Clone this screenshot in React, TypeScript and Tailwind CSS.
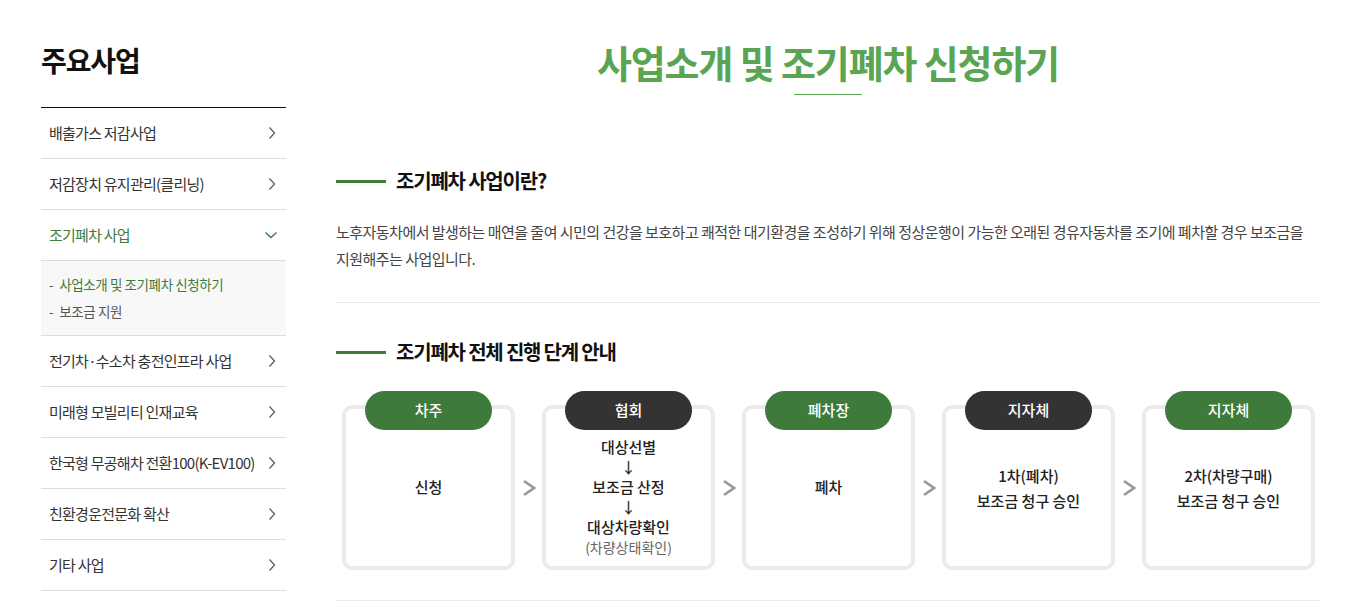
import React from "react";

const FONT = '"Noto Sans CJK KR", "Noto Sans", sans-serif';

function ChevronRight() {
  return (
    <svg width="8" height="14" viewBox="0 0 8 14" fill="none">
      <polyline points="1.5,1.5 6.5,7 1.5,12.5" stroke="#666" strokeWidth="1.4" />
    </svg>
  );
}

function ChevronDown() {
  return (
    <svg width="14" height="8" viewBox="0 0 14 8" fill="none">
      <polyline points="1.5,1.5 7,6.5 12.5,1.5" stroke="#3f7b3a" strokeWidth="1.4" />
    </svg>
  );
}

function StepArrow() {
  return (
    <div className="flex w-[27px] shrink-0 items-center justify-center pt-[14px]">
      <svg width="14" height="18" viewBox="0 0 14 18" fill="none">
        <polyline points="2,2 12,9 2,16" stroke="#999" strokeWidth="2.6" />
      </svg>
    </div>
  );
}

function Step({
  label,
  dark,
  children,
}: {
  label: string;
  dark?: boolean;
  children: React.ReactNode;
}) {
  return (
    <div className="relative w-[173px] shrink-0 pt-[14px]">
      <div
        className={`absolute left-[23px] top-0 flex h-[39px] w-[127px] items-center justify-center rounded-full text-[15px] font-medium text-white ${
          dark ? "bg-[#333333]" : "bg-[#3e7b3a]"
        }`}
      >
        {label}
      </div>
      <div className="flex h-[165px] flex-col items-center justify-center rounded-[10px] border-4 border-[#ebebeb] bg-white text-center text-[15px] font-medium text-[#222]">
        {children}
      </div>
    </div>
  );
}

function SectionHeading({ children }: { children: React.ReactNode }) {
  return (
    <div className="flex items-center gap-[10px]">
      <div className="h-[3px] w-[50px] bg-[#3f7b3a]" />
      <h3 className="text-[20px] font-bold tracking-[-0.06em] text-[#111]">{children}</h3>
    </div>
  );
}

const menu = ["배출가스 저감사업", "저감장치 유지관리(클리닝)"];
const menu2 = [
  "전기차·수소차 충전인프라 사업",
  "미래형 모빌리티 인재교육",
  "한국형 무공해차 전환100(K-EV100)",
  "친환경운전문화 확산",
  "기타 사업",
];

function MenuItem({ text }: { text: string }) {
  return (
    <li className="flex h-[51px] items-center justify-between border-b border-[#dddddd] pl-[8px] pr-[10px] text-[15px] tracking-[-0.05em] text-[#333]">
      <span>{text}</span>
      <ChevronRight />
    </li>
  );
}

export default function App() {
  return (
    <div className="flex bg-white pl-[41px]" style={{ fontFamily: FONT }}>
      <aside className="w-[245px] shrink-0 pt-[40px]">
        <h2 className="text-[28px] font-bold leading-[40px] tracking-[-0.04em] text-[#111]">주요사업</h2>
        <ul className="mt-[27px] border-t border-[#111]">
          {menu.map((m) => (
            <MenuItem key={m} text={m} />
          ))}
          <li className="flex h-[51px] items-center justify-between border-b border-[#dddddd] pl-[8px] pr-[8px] text-[15px] tracking-[-0.05em] text-[#3f7b3a]">
            <span>조기폐차 사업</span>
            <ChevronDown />
          </li>
          <li className="border-b border-[#dddddd] bg-[#f8f8f8] py-[10px] pl-[8px] text-[13.5px] leading-[27px] tracking-[-0.03em]">
            <div className="flex gap-[6px] text-[#3f7b3a]">
              <span className="text-[#555]">-</span>
              <span>사업소개 및 조기폐차 신청하기</span>
            </div>
            <div className="flex gap-[6px] text-[#555]">
              <span>-</span>
              <span>보조금 지원</span>
            </div>
          </li>
          {menu2.map((m) => (
            <MenuItem key={m} text={m} />
          ))}
        </ul>
      </aside>

      <main className="ml-[50px] w-[984px] shrink-0">
        <div className="flex flex-col items-center pt-[38px]">
          <h1 className="text-[38px] font-bold leading-[48px] tracking-[-0.03em] text-[#5aa553]">
            사업소개 및 조기폐차 신청하기
          </h1>
          <div className="mt-[8px] h-px w-[68px] bg-[#5aa553]" />
        </div>

        <div className="mt-[71px]">
          <SectionHeading>조기폐차 사업이란?</SectionHeading>
          <p className="mt-[22px] break-keep text-[15px] leading-[27px] tracking-[-0.035em] text-[#444]">
            노후자동차에서 발생하는 매연을 줄여 시민의 건강을 보호하고 쾌적한 대기환경을 조성하기 위해 정상운행이 가능한 오래된 경유자동차를 조기에 폐차할 경우 보조금을 지원해주는 사업입니다.
          </p>
        </div>

        <div className="mt-[30px] h-px w-full bg-[#ebebeb]" />

        <div className="mt-[34px]">
          <SectionHeading>조기폐차 전체 진행 단계 안내</SectionHeading>
          <div className="mt-[24px] flex pl-[6px]">
            <Step label="차주">신청</Step>
            <StepArrow />
            <Step label="협회" dark>
              <div className="mt-[19px] leading-[20px]">
                <div>대상선별</div>
                <div>↓</div>
                <div>보조금 산정</div>
                <div>↓</div>
                <div>대상차량확인</div>
                <div className="text-[14px] font-normal text-[#666]">(차량상태확인)</div>
              </div>
            </Step>
            <StepArrow />
            <Step label="폐차장">폐차</Step>
            <StepArrow />
            <Step label="지자체" dark>
              <div className="leading-[25px]">
                <div>1차(폐차)</div>
                <div>보조금 청구 승인</div>
              </div>
            </Step>
            <StepArrow />
            <Step label="지자체">
              <div className="leading-[25px]">
                <div>2차(차량구매)</div>
                <div>보조금 청구 승인</div>
              </div>
            </Step>
          </div>
          <div className="mt-[30px] h-px w-full bg-[#ebebeb]" />
        </div>
      </main>
    </div>
  );
}
